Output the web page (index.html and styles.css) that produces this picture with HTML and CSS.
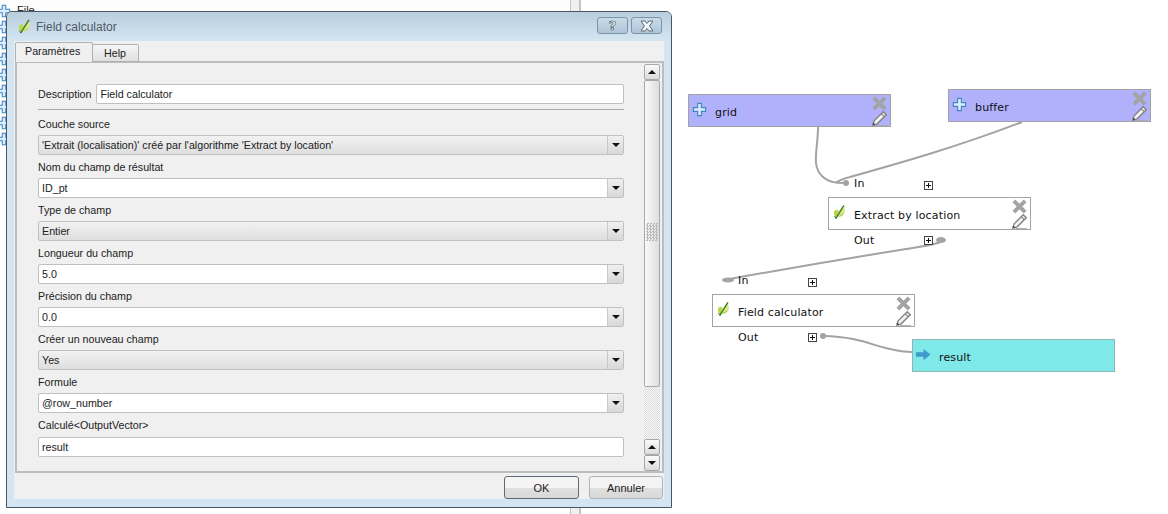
FILE: index.html
```html
<!DOCTYPE html>
<html lang="fr">
<head>
<meta charset="utf-8">
<title>Field calculator</title>
<link rel="stylesheet" href="styles.css">
</head>
<body>
<svg class="defs" width="0" height="0">
  <defs>
    <symbol id="plus" viewBox="0 0 16 16"><path d="M6 1.500h4v4.500h4.500v4H10v4.500H6V10H1.500V6H6z" fill="#dcecfa" stroke="#3f86c4" stroke-width="1.200"/></symbol>
    <symbol id="del" viewBox="0 0 16 16"><path d="M0.500 3.500l3-3L8 5l4.500-4.500 3 3L11 8l4.500 4.500-3 3L8 11l-4.500 4.500-3-3L5 8z" fill="#a3a3a3"/></symbol>
    <symbol id="pen" viewBox="0 0 16 16"><path d="M12 .8l3.200 3.200L5.500 13.700 1 15l1.300-4.500z" fill="#f4f4f4" stroke="#828282" stroke-width="1.500"/><path d="M10 3l3 3" stroke="#828282" stroke-width="1.200" fill="none"/><path d="M1 13l2 2" stroke="#333" stroke-width="1.200"/><path d="M4 15.500h12" stroke="#aaa"/></symbol>
    <symbol id="qgis" viewBox="0 0 16 16"><path d="M1 9c0-2 1-3 2.500-3.500C5 5 6 6 6.500 7L4 14C2 13 1 11 1 9z" fill="#b9d94a"/><path d="M7 7c1-2 3-4 6-4 1 3 1 6-1 8s-5 3-7 3z" fill="#dbe88e"/><path d="M3 15.500L12.500 .5" stroke="#3c7d1c" stroke-width="1.600"/><path d="M1.500 12.500l2 3" stroke="#2d5a1a" stroke-width=".9"/><path d="M7.500 12.500c2-.5 3.500-1.500 4.500-3" stroke="#9cc23a" fill="none"/></symbol>
    <symbol id="arrow" viewBox="0 0 16 16"><path d="M0 5.500h8V2l7.500 6L8 14v-3.500H0z" fill="#3f9cca"/></symbol>
  </defs>
</svg>

<main class="desktop">
  <section class="backdrop">
    <span class="backdrop-file">File</span>
  </section>
  <div class="splitter splitter-top"></div>
  <div class="splitter splitter-bottom"></div>

  <div class="tree-icons">
    <svg class="tree-plus"><use href="#plus"/></svg>
    <svg class="tree-plus"><use href="#plus"/></svg>
    <svg class="tree-plus"><use href="#plus"/></svg>
    <svg class="tree-plus"><use href="#plus"/></svg>
    <svg class="tree-plus"><use href="#plus"/></svg>
    <svg class="tree-plus"><use href="#plus"/></svg>
    <svg class="tree-plus"><use href="#plus"/></svg>
    <svg class="tree-plus"><use href="#plus"/></svg>
    <svg class="tree-plus"><use href="#plus"/></svg>
  </div>

  <svg class="wires" width="1168" height="514" viewBox="0 0 1168 514">
    <g fill="none" stroke="#a3a3a3" stroke-width="2">
      <path d="M818 127C818 150 811 165 822 176C829 183 838 183 846 183"/>
      <path d="M1022 122C960 146 900 163 850 177C842 179 838 181 836 183"/>
      <path d="M945 240C935 245 925 246 900 250C850 258 790 268 724 280"/>
      <path d="M823 336C860 337 870 345 890 349C898 351 905 352 912 352"/>
    </g>
    <g fill="#a3a3a3">
      <circle cx="846" cy="183" r="3"/>
      <ellipse cx="941" cy="240" rx="5" ry="3"/>
      <ellipse cx="728" cy="280" rx="6" ry="2.500"/>
      <circle cx="823" cy="336" r="3"/>
    </g>
  </svg>

  <article class="node node-input node-grid">
    <svg class="node-icon"><use href="#plus"/></svg><span class="node-name">grid</span>
    <div class="node-tools"><svg class="tool"><use href="#del"/></svg><svg class="tool"><use href="#pen"/></svg></div>
  </article>
  <article class="node node-input node-buffer">
    <svg class="node-icon"><use href="#plus"/></svg><span class="node-name">buffer</span>
    <div class="node-tools"><svg class="tool"><use href="#del"/></svg><svg class="tool"><use href="#pen"/></svg></div>
  </article>
  <article class="node node-algo node-extract">
    <svg class="node-icon node-icon-leaf"><use href="#qgis"/></svg><span class="node-name">Extract by location</span>
    <div class="node-tools"><svg class="tool"><use href="#del"/></svg><svg class="tool"><use href="#pen"/></svg></div>
  </article>
  <article class="node node-algo node-field">
    <svg class="node-icon node-icon-leaf"><use href="#qgis"/></svg><span class="node-name">Field calculator</span>
    <div class="node-tools"><svg class="tool"><use href="#del"/></svg><svg class="tool"><use href="#pen"/></svg></div>
  </article>
  <article class="node node-output node-result">
    <svg class="node-icon"><use href="#arrow"/></svg><span class="node-name">result</span>
  </article>

  <span class="port-label port-in-1">In</span>
  <span class="port-label port-out-1">Out</span>
  <span class="port-label port-in-2">In</span>
  <span class="port-label port-out-2">Out</span>
  <span class="expander exp-1"></span>
  <span class="expander exp-2"></span>
  <span class="expander exp-3"></span>
  <span class="expander exp-4"></span>

  <section class="dialog">
    <header class="titlebar">
      <svg class="title-icon"><use href="#qgis"/></svg>
      <h1 class="title">Field calculator</h1>
      <div class="title-buttons">
        <button class="cap-btn">?</button>
        <button class="cap-btn cap-close"><svg class="cap-x" viewBox="0 0 16 12"><path d="M2 1h4l2 2.500L10 1h4l-3.500 5L14 11h-4L8 8.500 6 11H2l3.500-5z" fill="#f4f7fa" stroke="#5d6b78"/></svg></button>
      </div>
    </header>
    <div class="client">
      <nav class="tabs">
        <span class="tab tab-active">Paramètres</span>
        <span class="tab">Help</span>
      </nav>
      <div class="panel">
        <form class="form">
          <div class="desc-row">
            <label class="label">Description</label>
            <div class="input input-desc">Field calculator</div>
          </div>
          <hr class="rule">
          <label class="label">Couche source</label>
          <div class="combo combo-grey"><span class="combo-text">'Extrait (localisation)' créé par l'algorithme 'Extract by location'</span><span class="combo-btn"><i class="tri-down"></i></span></div>
          <label class="label">Nom du champ de résultat</label>
          <div class="combo"><span class="combo-text">ID_pt</span><span class="combo-btn"><i class="tri-down"></i></span></div>
          <label class="label">Type de champ</label>
          <div class="combo combo-grey"><span class="combo-text">Entier</span><span class="combo-btn"><i class="tri-down"></i></span></div>
          <label class="label">Longueur du champ</label>
          <div class="combo"><span class="combo-text">5.0</span><span class="combo-btn"><i class="tri-down"></i></span></div>
          <label class="label">Précision du champ</label>
          <div class="combo"><span class="combo-text">0.0</span><span class="combo-btn"><i class="tri-down"></i></span></div>
          <label class="label">Créer un nouveau champ</label>
          <div class="combo combo-grey"><span class="combo-text">Yes</span><span class="combo-btn"><i class="tri-down"></i></span></div>
          <label class="label">Formule</label>
          <div class="combo"><span class="combo-text">@row_number</span><span class="combo-btn"><i class="tri-down"></i></span></div>
          <label class="label label-last">Calculé&lt;OutputVector&gt;</label>
          <div class="input">result</div>
        </form>
        <div class="scrollbar">
          <span class="sb-btn"><i class="tri-up"></i></span>
          <span class="sb-thumb"><i class="grip"></i></span>
          <span class="sb-track"></span>
          <span class="sb-btn sb-small"><i class="tri-up"></i></span>
          <span class="sb-btn sb-small"><i class="tri-down"></i></span>
        </div>
      </div>
      <footer class="actions">
        <button class="btn btn-default">OK</button>
        <button class="btn">Annuler</button>
      </footer>
    </div>
  </section>
</main>
</body>
</html>
```
FILE: styles.css
```css
* { box-sizing: border-box; }
html, body { margin: 0; padding: 0; background: #fff; }
.defs { position: absolute; }
.desktop {
  position: relative;
  width: 1168px;
  height: 514px;
  overflow: hidden;
  background: #fff;
  font-family: "Liberation Sans", Arial, sans-serif;
}

/* Backdrop window behind the dialog */
.backdrop {
  position: absolute;
  left: 0; top: 0;
  width: 571px;
  height: 12px;
  background: #fdfdfd;
  border-right: 1px solid #c4c4c4;
}
.backdrop-file {
  position: absolute;
  left: 17px; top: 4px;
  font: 11px "Liberation Sans", sans-serif;
  color: #222;
}
.splitter {
  position: absolute;
  left: 570px;
  width: 11px;
  background: #f0f0f0;
  border-left: 1px solid #c4c4c4;
  border-right: 2px solid #c4c4c4;
}
.splitter-top { top: 0; height: 12px; }
.splitter-bottom { top: 508px; height: 6px; }
.tree-icons {
  position: absolute;
  left: -3px; top: 4px;
  display: flex;
  flex-direction: column;
  gap: 2px;
}
.tree-plus { width: 14px; height: 14px; display: block; }

/* Modeler canvas */
.wires { position: absolute; left: 0; top: 0; }
.node {
  position: absolute;
  width: 203px;
  height: 33px;
  border: 1px solid #a3a3a3;
  display: flex;
  align-items: center;
  font: 11px "DejaVu Sans", Verdana, sans-serif;
  letter-spacing: .15px;
  color: #111;
}
.node-input { background: #b0b0fb; }
.node-algo { background: #fff; }
.node-output { background: #7fe8e8; border-color: #8fb5b5; }
.node-grid { left: 688px; top: 94px; }
.node-buffer { left: 948px; top: 89px; }
.node-extract { left: 828px; top: 197px; }
.node-field { left: 712px; top: 294px; }
.node-result { left: 912px; top: 339px; }
.node-icon { width: 15px; height: 15px; margin: -3px 8px 0 3px; flex: none; }
.node-icon-leaf { width: 14px; height: 14px; margin: -4px 7px 0 4px; }
.node-name { padding-top: 3px; }
.node-tools {
  margin-left: auto;
  margin-right: 2px;
  display: flex;
  flex-direction: column;
  width: 16px;
}
.tool { width: 15px; height: 15px; display: block; }
.port-label {
  position: absolute;
  font: 11px "DejaVu Sans", Verdana, sans-serif;
  letter-spacing: .15px;
  color: #111;
}
.port-in-1 { left: 854px; top: 177px; }
.port-out-1 { left: 854px; top: 234px; }
.port-in-2 { left: 738px; top: 274px; }
.port-out-2 { left: 738px; top: 331px; }
.expander {
  position: absolute;
  width: 9px;
  height: 9px;
  border: 1px solid #444;
  background:
    linear-gradient(#111, #111) center / 5px 1px no-repeat,
    linear-gradient(#111, #111) center / 1px 5px no-repeat,
    #fff;
}
.exp-1 { left: 924px; top: 181px; }
.exp-2 { left: 924px; top: 236px; }
.exp-3 { left: 808px; top: 278px; }
.exp-4 { left: 808px; top: 333px; }

/* Dialog */
.dialog {
  position: absolute;
  left: 6px; top: 11px;
  width: 666px;
  height: 497px;
  border: 1px solid #4a5763;
  border-radius: 6px 6px 0 0;
  background: #d3e4f2;
  display: flex;
  flex-direction: column;
  padding: 0 7px 8px;
  font: 10.7px "Liberation Sans", Arial, sans-serif;
  color: #222;
}
.titlebar {
  height: 29px;
  flex: none;
  margin: 0 -7px;
  padding: 0 7px 0 11px;
  display: flex;
  align-items: center;
  background: linear-gradient(#b8cede, #d5e5f2);
  border-radius: 5px 5px 0 0;
}
.title-icon { width: 14px; height: 15px; flex: none; margin: -1px 4px 0 0; }
.title {
  margin: 0;
  font: 12px "Liberation Sans", Arial, sans-serif;
  color: #4d5a66;
}
.title-buttons {
  margin-left: auto;
  display: flex;
  gap: 3px;
  margin-top: -2px;
  margin-right: 2px;
}
.cap-btn {
  width: 31px;
  height: 17px;
  padding: 0;
  border: 1px solid #7d93a8;
  border-radius: 3px;
  background: linear-gradient(#c8dbe9, #aec5d8);
  font: bold 13px/14px "DejaVu Sans", sans-serif;
  color: #f4f7fa;
  -webkit-text-stroke: .6px #45525e;
  display: flex;
  align-items: center;
  justify-content: center;
}
.cap-x { width: 16px; height: 12px; display: block; }
.client {
  flex: 1;
  min-height: 0;
  background: #f0f0f0;
  display: flex;
  flex-direction: column;
}
.tabs {
  height: 21px;
  flex: none;
  display: flex;
  align-items: flex-end;
  padding-left: 1px;
  position: relative;
  margin-bottom: -1px;
  z-index: 1;
}
.tab {
  height: 18px;
  width: 46px;
  padding: 0 0 0 11px;
  border: 1px solid #b0b0b0;
  border-left: none;
  border-radius: 0 2px 0 0;
  background: linear-gradient(#f6f6f6, #e0e0e0);
  line-height: 16px;
}
.tab-active {
  height: 20px;
  width: 78px;
  padding: 0 0 0 9px;
  border: 1px solid #b0b0b0;
  border-bottom: none;
  border-radius: 2px 2px 0 0;
  background: #f0f0f0;
  line-height: 17px;
}
.panel {
  position: relative;
  height: 412px;
  flex: none;
  margin: 0 0 0 1px;
  border: 2px solid #bdbdbd;
  background: #f0f0f0;
  display: flex;
}
.form {
  width: 627px;
  flex: none;
  padding: 21px 20px 0 21px;
  display: flex;
  flex-direction: column;
}
.desc-row { display: flex; align-items: center; height: 20px; gap: 5px; }
.desc-row .label { height: auto; line-height: 20px; padding: 0; margin-top: -1px; }
.label { height: 23px; line-height: 14px; padding-top: 5px; color: #222; white-space: nowrap; }
.label-last { height: 24px; }
.rule { width: 100%; margin: 5px 0 5px; border: 0; border-top: 1px solid #a8a8a8; height: 0; }
.rule + .label { height: 20px; padding-top: 2px; margin-top: 0; }
.input, .combo {
  height: 20px;
  flex: none;
  border: 1px solid #c0c0c0;
  border-radius: 2px;
  background: #fff;
  line-height: 18px;
  padding-left: 3px;
  color: #222;
}
.desc-row .input-desc { flex: 1; line-height: 19px; }
.combo { display: flex; padding-left: 0; }
.combo-text { flex: 1; padding-left: 3px; white-space: nowrap; overflow: hidden; }
.combo-grey { background: linear-gradient(#f2f2f2, #dedede); }
.combo-btn {
  width: 16px;
  flex: none;
  background: linear-gradient(#f0f0f0, #d8d8d8);
  border-left: 1px solid #c8c8c8;
  display: flex;
  align-items: center;
  justify-content: center;
}
.tri-down, .tri-up { display: block; width: 0; height: 0; border-left: 4px solid transparent; border-right: 4px solid transparent; }
.tri-down { border-top: 4px solid #111; }
.tri-up { border-bottom: 4px solid #111; }
.scrollbar {
  width: 16px;
  margin: 1px 0 0;
  flex: none;
  display: flex;
  flex-direction: column;
}
.sb-btn {
  height: 16px;
  flex: none;
  border: 1px solid #a8a8a8;
  border-radius: 2px;
  background: linear-gradient(#fafafa, #dcdcdc);
  display: flex;
  align-items: center;
  justify-content: center;
}
.sb-thumb {
  height: 307px;
  flex: none;
  border: 1px solid #a8a8a8;
  border-radius: 2px;
  background: linear-gradient(90deg, #fafafa, #dedede);
}
.sb-track {
  flex: 1;
  background: repeating-conic-gradient(#dcdcdc 0 25%, #f8f8f8 0 50%) 0 0 / 2px 2px;
}
.grip {
  position: absolute;
  right: 4px;
  top: 160px;
  width: 12px;
  height: 18px;
  background: repeating-conic-gradient(#bbb 0 25%, transparent 0 50%) 0 0 / 3px 3px;
  display: block;
}
.actions {
  flex: 1;
  display: flex;
  justify-content: flex-end;
  gap: 10px;
  padding: 3px 1px 0 0;
  align-items: flex-start;
}
.btn {
  width: 74px;
  height: 23px;
  padding: 0;
  border: 1px solid #b2b2b2;
  border-radius: 3px;
  background: linear-gradient(#f4f4f4 50%, #e0e0e0 50%, #d8d8d8);
  font: 11px "Liberation Sans", Arial, sans-serif;
  color: #222;
}
.btn-default { width: 75px; border-color: #5e6a75; }
```
